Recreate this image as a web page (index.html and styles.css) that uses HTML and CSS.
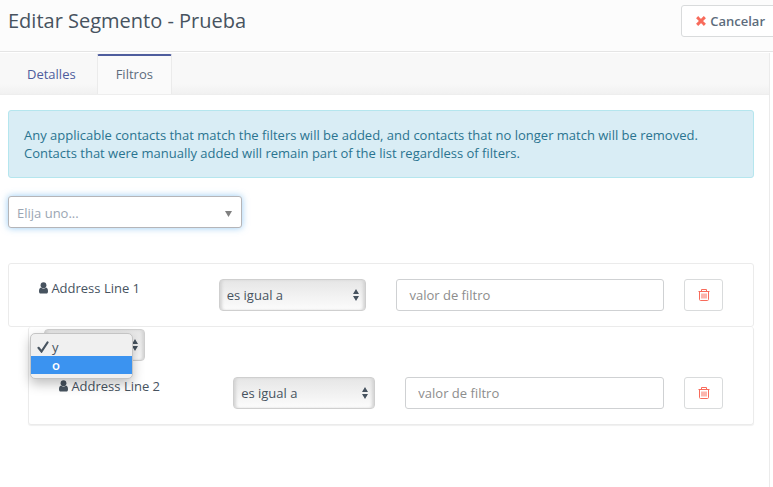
FILE: index.html
```html
<!DOCTYPE html>
<html lang="es">
<head>
    <meta charset="UTF-8">
    <meta name="viewport" content="width=device-width, initial-scale=1.0">
    <title>Editar Segmento - Prueba</title>
    <link rel="stylesheet" href="styles.css">
</head>
<body>
    <svg class="sprite" aria-hidden="true">
        <symbol id="icon-user" viewBox="0 0 9 12">
            <circle cx="4.5" cy="3.2" r="2.9"/>
            <path d="M2 5.400C.6 5.700 0 7 0 9.200c0 1.500.6 2.300 1.700 2.300h5.600c1.100 0 1.700-.8 1.700-2.300 0-2.200-.6-3.500-2-3.800-.7.800-1.600 1.100-2.500 1.100S2.700 6.200 2 5.400z"/>
        </symbol>
        <symbol id="icon-trash" viewBox="0 0 12 12">
            <path d="M.5 2.500h11M3.500 2.500v-2h5v2M1.500 2.500v8c0 .6.400 1 1 1h7c.6 0 1-.4 1-1v-8M4 4.500v5M6 4.500v5M8 4.500v5" fill="none" stroke="currentColor"/>
        </symbol>
    </svg>

    <header class="page-header">
        <h1>Editar Segmento - Prueba</h1>
        <button type="button" class="btn btn-cancel">
            <svg viewBox="0 0 10 10" aria-hidden="true"><path d="M2.200 2.200l5.600 5.600M7.800 2.200L2.200 7.800" stroke="currentColor" stroke-width="3" stroke-linecap="square"/></svg>
            Cancelar
        </button>
    </header>

    <main class="content">
        <nav class="tabs">
            <a href="#detalles">Detalles</a>
            <a href="#filtros" class="active" aria-current="page">Filtros</a>
        </nav>

        <div class="panel" id="filtros">
            <div class="alert">Any applicable contacts that match the filters will be added, and contacts that no longer match will be removed. Contacts that were manually added will remain part of the list regardless of filters.</div>

            <select class="filter-picker" aria-label="Elija uno">
                <option>Elija uno...</option>
            </select>

            <div class="filter">
                <div class="filter-row">
                    <label class="filter-name" for="value1"><svg aria-hidden="true"><use href="#icon-user"/></svg> Address Line 1</label>
                    <div class="filter-operator">
                        <select class="select" aria-label="Operador de Address Line 1">
                            <option>es igual a</option>
                        </select>
                    </div>
                    <div class="filter-value">
                        <input type="text" id="value1" placeholder="valor de filtro">
                    </div>
                    <button type="button" class="btn btn-remove" aria-label="Eliminar"><svg aria-hidden="true"><use href="#icon-trash"/></svg></button>
                </div>
            </div>

            <div class="filter filter-nested">
                <div class="glue">
                    <select class="select" aria-label="Condición">
                        <option></option>
                    </select>
                    <ul class="glue-menu" role="listbox" aria-label="Condición">
                        <li role="option" aria-selected="true"><svg viewBox="0 0 12 12" aria-hidden="true"><path d="M1.500 6.800l3 3.700L10.500 1.500" fill="none" stroke="currentColor" stroke-width="2.200" stroke-linecap="round"/></svg>y</li>
                        <li role="option" aria-selected="false" class="highlighted">o</li>
                    </ul>
                </div>
                <div class="filter-row">
                    <label class="filter-name" for="value2"><svg aria-hidden="true"><use href="#icon-user"/></svg> Address Line 2</label>
                    <div class="filter-operator">
                        <select class="select" aria-label="Operador de Address Line 2">
                            <option>es igual a</option>
                        </select>
                    </div>
                    <div class="filter-value">
                        <input type="text" id="value2" placeholder="valor de filtro">
                    </div>
                    <button type="button" class="btn btn-remove" aria-label="Eliminar"><svg aria-hidden="true"><use href="#icon-trash"/></svg></button>
                </div>
            </div>
        </div>
    </main>
</body>
</html>
```

FILE: styles.css
```css
* {
    margin: 0;
    padding: 0;
    box-sizing: border-box;
}

body {
    font-family: 'Open Sans', 'Noto Sans', sans-serif;
    font-size: 13px;
    line-height: 18px;
    color: #47535f;
    background: #fff;
    min-height: 100vh;
    display: flex;
    flex-direction: column;
}

button,
input,
select {
    font: inherit;
    color: inherit;
}

.sprite {
    display: none;
}

/* Header */
.page-header {
    display: flex;
    align-items: flex-start;
    justify-content: space-between;
    height: 52px;
    padding: 5px 0 0 8px;
    background: #fcfcfc;
    border-bottom: 1px solid #e5e5e5;
    overflow: hidden;
}

.page-header h1 {
    font-size: 20px;
    font-weight: 400;
    line-height: 32px;
}

.btn {
    display: flex;
    align-items: center;
    justify-content: center;
    height: 32px;
    background: #fff;
    border: 1px solid #d9dbdc;
    border-radius: 3px;
    cursor: pointer;
}

.btn svg {
    color: #f86b5b;
}

.btn-cancel {
    gap: 4px;
    padding: 0 12px 0 14px;
    margin-right: -5px;
    font-weight: 600;
    color: #5d6c7c;
}

.btn-cancel svg {
    width: 10px;
    height: 10px;
}

/* Tabs */
.content {
    flex: 1;
    margin: 1px 3px 0 0;
    border-right: 1px solid #ebebeb;
}

.tabs {
    display: flex;
    height: 42px;
    padding-left: 9px;
    background: linear-gradient(#f8f8f8 75%, #f1f1f1);
    border-bottom: 1px solid #eee;
}

.tabs a {
    padding: 12px 18px;
    color: #4e5d9d;
    text-decoration: none;
}

.tabs .active {
    margin: 1px 0 0 3px;
    padding-top: 9px;
    color: #5d6c7c;
    background: #fafafa;
    border: solid #ebebeb;
    border-width: 2px 1px 0;
    border-top-color: #4e5d9d;
    border-radius: 2px 2px 0 0;
}

/* Filters */
.panel {
    padding: 15px 15px 15px 8px;
}

.alert {
    margin-bottom: 18px;
    padding: 15px;
    color: #2a7490;
    background: #d9edf5;
    border: 1px solid #b5e6ee;
    border-radius: 3px;
}

.filter-picker {
    display: block;
    width: 234px;
    height: 32px;
    margin-bottom: 35px;
    padding: 1px 8px 0;
    appearance: none;
    color: #9ba6b3;
    background: #fff url("data:image/svg+xml,%3Csvg xmlns='http://www.w3.org/2000/svg' width='7' height='6'%3E%3Cpath d='M0 0h7L3.5 6z' fill='%23808080'/%3E%3C/svg%3E") no-repeat right 9px top 14px;
    border: 1px solid #b5b5b8;
    border-radius: 3px;
    box-shadow: 0 0 7px rgba(82, 168, 236, 0.6);
}

.filter {
    padding: 15px 30px;
    border: 1px solid #ebebeb;
    border-radius: 3px;
}

.filter-nested {
    margin-left: 20px;
    padding-top: 2px;
    border-top: 0;
    box-shadow: 0 1px 1px #f0f0f0;
}

.filter-row {
    display: grid;
    grid-template-columns: 180fr 178fr 288fr 39px;
}

.filter-name svg {
    width: 9px;
    height: 12px;
    fill: currentColor;
    vertical-align: -1px;
}

.filter-operator {
    padding-right: 30px;
}

.filter-value {
    padding-right: 20px;
}

.filter-value input {
    width: 100%;
    height: 32px;
    padding: 0 12px;
    background: #fff;
    border: 1px solid #cfd1d3;
    border-radius: 3px;
}

.filter-value input::placeholder {
    color: #8d8d8d;
}

.select {
    display: block;
    width: 100%;
    height: 32px;
    padding: 0 7px;
    appearance: none;
    background: url("data:image/svg+xml,%3Csvg xmlns='http://www.w3.org/2000/svg' width='6' height='12'%3E%3Cpath d='M0 5l3-5 3 5zM0 7h6l-3 5z' fill='%2347535f'/%3E%3C/svg%3E") no-repeat right 6px center, linear-gradient(#e6e6e6, #fcfcfc);
    border: 1px solid #cfcfcf;
    border-radius: 4px;
    box-shadow: inset 3px 0 3px -1px #d4d4d4, inset -3px 0 3px -1px #d4d4d4;
}

.btn-remove svg {
    width: 12px;
    height: 12px;
}

.glue {
    position: relative;
    width: 101px;
    margin: 0 0 16px -15px;
}

/* Open option list, drawn over the select */
.glue-menu {
    position: absolute;
    top: 4px;
    left: -14px;
    width: 103px;
    padding: 4px 0;
    list-style: none;
    background: #f0f0f0;
    border: 1px solid #c4c4c4;
    border-radius: 5px;
    box-shadow: 0 5px 12px rgba(0, 0, 0, 0.25);
}

.glue-menu li {
    position: relative;
    height: 18px;
    padding-left: 21px;
}

.glue-menu svg {
    position: absolute;
    top: 3px;
    left: 6px;
    width: 12px;
    height: 12px;
}

.glue-menu .highlighted {
    color: #fff;
    font-weight: 600;
    background: #3b93f0;
}
```
